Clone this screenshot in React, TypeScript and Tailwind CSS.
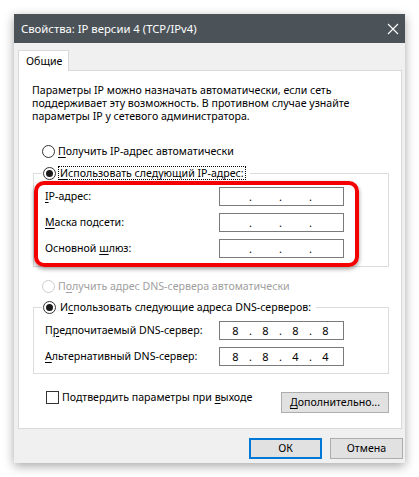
import { Fragment, ReactNode } from 'react';

function U({ children }: { children: ReactNode }) {
  return <span className="underline underline-offset-[2px] decoration-[1px]">{children}</span>;
}

function Radio({ checked, disabled }: { checked?: boolean; disabled?: boolean }) {
  return (
    <span
      className={`w-[13px] h-[13px] shrink-0 rounded-full border bg-white flex items-center justify-center ${
        disabled ? 'border-[#cccccc]' : 'border-[#333333]'
      }`}
    >
      {checked && <span className="w-[7px] h-[7px] rounded-full bg-[#1a1a1a]" />}
    </span>
  );
}

function IpField({ values }: { values?: string[] }) {
  const v = values ?? ['', '', '', ''];
  return (
    <div className="w-[125px] h-[19px] border border-[#7a7a7a] bg-white flex items-center pl-[4px] leading-[17px] text-[11px]">
      {v.map((x, i) => (
        <Fragment key={i}>
          {i > 0 && <span className="w-[7px] text-center">.</span>}
          <span className="w-[23px] text-center">{x}</span>
        </Fragment>
      ))}
    </div>
  );
}

function Row({ label, values }: { label: ReactNode; values?: string[] }) {
  return (
    <div className="flex items-center justify-between h-[19px]">
      <span className="whitespace-nowrap">{label}</span>
      <IpField values={values} />
    </div>
  );
}

export default function App() {
  return (
    <div className="w-[419px] h-[477px] bg-white pl-[14px] pt-[14px] font-['Noto_Sans',sans-serif] text-[10.6px] text-black leading-[13px]">
      <div className="w-[391px] h-[449px] bg-[#f0f0f0] flex flex-col shadow-[0_3px_10px_rgba(0,0,0,0.35)]">
        {/* title bar */}
        <div className="h-[29px] bg-[#4b5359] flex items-center justify-between pl-[7px] pr-[5px] text-white">
          <span className="text-[11.3px] whitespace-nowrap">Свойства: IP версии 4 (TCP/IPv4)</span>
          <svg width="12" height="12" viewBox="0 0 12 12" className="mr-[1px]">
            <path d="M1 1 L11 11 M11 1 L1 11" stroke="#ffffff" strokeWidth="1.1" />
          </svg>
        </div>

        <div className="pt-[7px] pl-[4px] pr-[3px] flex flex-col">
          <div className="w-[51px] h-[21px] border border-b-0 border-[#d9d9d9] bg-white -mb-px relative z-10 flex items-center pl-[7px]">
            Общие
          </div>
          <div className="h-[359px] border border-[#d9d9d9] bg-white pl-[14px] pr-[12px] pt-[13px] flex flex-col">
            <p className="-ml-[1px] whitespace-nowrap">
              Параметры IP можно назначать автоматически, если сеть
              <br />
              поддерживает эту возможность. В противном случае узнайте
              <br />
              параметры IP у сетевого администратора.
            </p>

            <div className="flex items-center gap-[3px] h-[14px] mt-[21px] ml-[9px] whitespace-nowrap">
              <Radio />
              <span>
                <U>П</U>олучить IP-адрес автоматически
              </span>
            </div>

            <div className="mt-[15px] border border-[#dcdcdc] relative pl-[11px] pr-[44px] pb-[8px]">
              <div className="-mt-[8px] ml-[-3px] w-fit bg-white pl-[1px] pr-[4px] flex items-center gap-[2px] h-[14px] whitespace-nowrap">
                <Radio checked />
                <span className="border border-dotted border-black px-[1px] leading-[12px]">
                  <U>И</U>спользовать следующий IP-адрес:
                </span>
              </div>
              <div className="mt-[7px] flex flex-col gap-[7px]">
                <Row label={<><U>I</U>P-адрес:</>} />
                <Row label={<><U>М</U>аска подсети:</>} />
                <Row label={<>Основной <U>ш</U>люз:</>} />
              </div>
              <div className="absolute left-0 top-[7px] w-[325px] h-[86px] border-[4px] border-[#f50000] rounded-[10px] shadow-[0_2px_4px_rgba(0,0,0,0.4)]" />
            </div>

            <div className="flex items-center gap-[3px] h-[14px] mt-[12px] ml-[9px] text-[#a0a0a0] whitespace-nowrap">
              <Radio disabled />
              <span>
                П<U>о</U>лучить адрес DNS-сервера автоматически
              </span>
            </div>

            <div className="mt-[14px] border border-[#dcdcdc] pl-[11px] pr-[44px] pb-[7px]">
              <div className="-mt-[8px] ml-[-3px] w-fit bg-white pl-[1px] pr-[4px] flex items-center gap-[3px] h-[14px] whitespace-nowrap">
                <Radio checked />
                <span className="px-[1px]">
                  И<U>с</U>пользовать следующие адреса DNS-серверов:
                </span>
              </div>
              <div className="mt-[7px] flex flex-col gap-[7px]">
                <Row label={<>П<U>р</U>едпочитаемый DNS-сервер:</>} values={['8', '8', '8', '8']} />
                <Row label={<><U>А</U>льтернативный DNS-сервер:</>} values={['8', '8', '4', '4']} />
              </div>
            </div>

            <div className="mt-[17px] flex items-start justify-between">
              <div className="flex items-center gap-[3px] ml-[13px] h-[13px] whitespace-nowrap">
                <span className="w-[13px] h-[13px] border border-[#333333] bg-white" />
                <span>
                  Подтвердить параметры при <U>в</U>ыходе
                </span>
              </div>
              <button className="w-[108px] h-[21px] border border-[#adadad] bg-[#e1e1e1] mt-px whitespace-nowrap">
                <U>Д</U>ополнительно...
              </button>
            </div>
          </div>
        </div>

        <div className="mt-[9px] pr-[2px] flex justify-end gap-[8px]">
          <button className="w-[73px] h-[21px] border-2 border-[#0078d7] bg-[#e1e1e1]">ОК</button>
          <button className="w-[73px] h-[21px] border border-[#adadad] bg-[#e1e1e1]">Отмена</button>
        </div>
      </div>
    </div>
  );
}
